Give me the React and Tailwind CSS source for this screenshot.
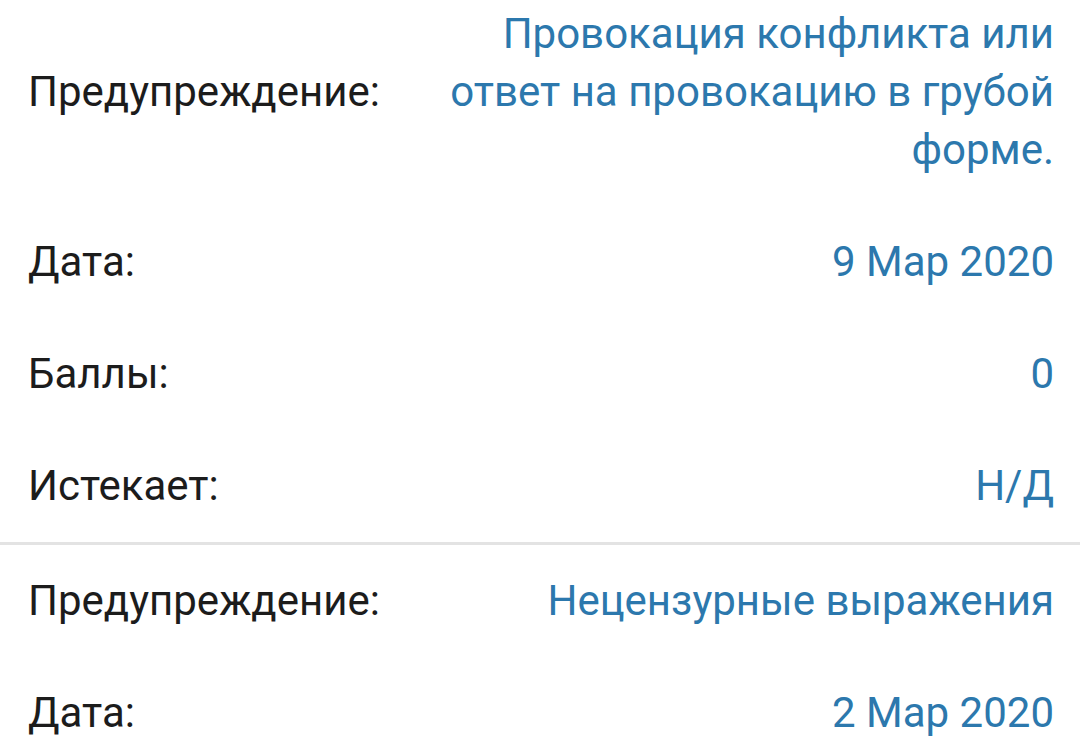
import React from 'react';

const warnings = [
  {
    reason: 'Провокация конфликта или ответ на провокацию в грубой форме.',
    date: '9 Мар 2020',
    points: '0',
    expires: 'Н/Д',
  },
  {
    reason: 'Нецензурные выражения',
    date: '2 Мар 2020',
    points: '0',
    expires: 'Н/Д',
  },
];

const Row = ({ label, value, first }) => (
  <div className={`flex items-center pl-[28px] pr-[26px] ${first ? 'pt-[5px] pb-[27px]' : 'py-[27px]'}`}>
    <div className="w-[406px] shrink-0 text-[#1c1c1c]">{label}</div>
    <div className="flex-1 text-right text-[#2c78ad]">{value}</div>
  </div>
);

const App = () => {
  return (
    <div
      className="h-[745px] w-full overflow-hidden bg-white text-[42px] leading-[58px]"
      style={{ fontFamily: 'Roboto, "Noto Sans", sans-serif' }}
    >
      {warnings.map((w, i) => (
        <div key={i} className={i > 0 ? 'border-t-[3px] border-[#e3e3e3]' : ''}>
          <Row label="Предупреждение:" value={w.reason} first={i === 0} />
          <Row label="Дата:" value={w.date} />
          <Row label="Баллы:" value={w.points} />
          <Row label="Истекает:" value={w.expires} />
        </div>
      ))}
    </div>
  );
};

export default App;
